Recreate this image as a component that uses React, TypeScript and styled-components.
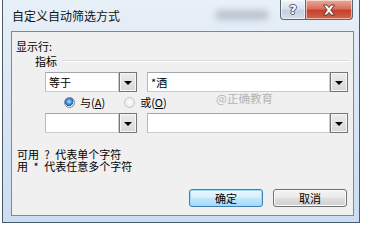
import React from "react";
import styled, { createGlobalStyle } from "styled-components";

const GlobalStyle = createGlobalStyle`
  body {
    margin: 0;
    background: #ffffff;
    font-family: "Noto Sans CJK SC", "Noto Sans", sans-serif;
  }
`;

const Window = styled.div`
  position: relative;
  margin-left: 2px;
  width: 358px;
  height: 223px;
  box-sizing: border-box;
  border: 1px solid #4a5a6c;
  border-top: none;
  background: linear-gradient(to bottom, #e8f0f8 0%, #dbe7f4 40%, #cbddf1 100%);
  display: flex;
  flex-direction: column;
`;

const TitleBar = styled.div`
  height: 31px;
  display: flex;
  align-items: flex-start;
  flex-shrink: 0;
`;

const TitleText = styled.div`
  padding-left: 9px;
  line-height: 31px;
  font-size: 12px;
  color: #111;
`;

const GlassBlur = styled.div`
  position: absolute;
  left: 212px;
  top: 10px;
  width: 54px;
  height: 10px;
  border-radius: 5px;
  background: rgba(90, 100, 115, 0.3);
  filter: blur(3px);
`;

const CaptionButtons = styled.div`
  margin-left: auto;
  margin-right: 6px;
  display: flex;
`;

const CaptionButton = styled.div<{ $close?: boolean }>`
  height: 20px;
  width: ${(p) => (p.$close ? "47px" : "26px")};
  box-sizing: border-box;
  border: 1px solid #5b6775;
  border-top: none;
  border-left: ${(p) => (p.$close ? "none" : "1px solid #5b6775")};
  border-radius: ${(p) => (p.$close ? "0 0 4px 0" : "0 0 0 4px")};
  box-shadow: inset 0 0 0 1px rgba(255, 255, 255, 0.55);
  background: ${(p) =>
    p.$close
      ? "linear-gradient(to bottom, #e9aa9c 0%, #d9705f 45%, #c8402c 55%, #d2644a 100%)"
      : "linear-gradient(to bottom, #eef3f9 0%, #d9e3ee 45%, #c4d2e2 55%, #d2deeb 100%)"};
  display: flex;
  align-items: center;
  justify-content: center;
`;

const HelpGlyph = styled.span`
  font-family: "DejaVu Sans", sans-serif;
  font-weight: bold;
  font-size: 13px;
  line-height: 13px;
  color: #ffffff;
  text-shadow: 0 0 1px #3c4a5a, 1px 0 0 #55606e, -1px 0 0 #55606e, 0 1px 0 #55606e,
    0 -1px 0 #55606e;
`;

const Client = styled.div`
  position: relative;
  margin: 0 5px 0 8px;
  width: 343px;
  height: 185px;
  box-sizing: border-box;
  border: 1px solid #7b8a9b;
  background: #f0f0f0;
  display: flex;
  flex-direction: column;
  font-size: 11px;
  color: #000;
`;

const ShowLabel = styled.div`
  margin: 8px 0 0 4px;
  line-height: 13px;
  height: 13px;
`;

const GroupHeader = styled.div`
  margin: 2px 4px 0 23px;
  height: 13px;
  display: flex;
  align-items: flex-start;
`;

const GroupTitle = styled.span`
  line-height: 13px;
`;

const GroupLine = styled.div`
  flex: 1;
  margin: 5px 0 0 5px;
  border-top: 1px solid #d5dde4;
  border-bottom: 1px solid #ffffff;
`;

const ComboRow = styled.div<{ $top: number }>`
  margin: ${(p) => p.$top}px 0 0 33px;
  height: 20px;
  display: flex;
  gap: 10px;
`;

const Combo = styled.div<{ $width: number }>`
  width: ${(p) => p.$width}px;
  height: 20px;
  display: flex;
`;

const ComboField = styled.div`
  flex: 1;
  box-sizing: border-box;
  background: #ffffff;
  border: 1px solid #c9cdd2;
  border-top-color: #a3a7ad;
  border-left-color: #b6bac0;
  padding-left: 3px;
  line-height: 18px;
`;

const DropButton = styled.div`
  width: 18px;
  box-sizing: border-box;
  border: 1px solid #767676;
  box-shadow: inset 0 0 0 1px #f6f6f6;
  background: linear-gradient(to bottom, #ececec, #d8d8d8);
  display: flex;
  align-items: center;
  justify-content: center;
`;

const Arrow = styled.div`
  width: 0;
  height: 0;
  margin-top: 1px;
  border-left: 4px solid transparent;
  border-right: 4px solid transparent;
  border-top: 4px solid #000;
`;

const RadioRow = styled.div`
  margin-left: 52px;
  height: 21px;
  display: flex;
  align-items: center;
`;

const RadioItem = styled.label<{ $gapAfter?: number }>`
  display: flex;
  align-items: center;
  gap: 5px;
  margin-right: ${(p) => p.$gapAfter ?? 0}px;
  line-height: 13px;
`;

const RadioCircle = styled.span<{ $checked?: boolean }>`
  width: 11px;
  height: 11px;
  box-sizing: border-box;
  border-radius: 50%;
  border: 1px solid ${(p) => (p.$checked ? "#7d8790" : "#c3c7cb")};
  background: ${(p) =>
    p.$checked
      ? "radial-gradient(circle at 45% 40%, #bfe3ff 0%, #3d8fe0 35%, #1a5cb8 60%, #e9edf1 62%, #dde2e7 100%)"
      : "radial-gradient(circle at 50% 45%, #ffffff 0%, #eeeeee 60%, #dcdcdc 100%)"};
`;

const Mnemonic = styled.span`
  text-decoration: underline;
`;

const Watermark = styled.div`
  position: absolute;
  left: 204px;
  top: 59px;
  font-size: 11.5px;
  line-height: 14px;
  color: #b4b4b4;
`;

const HelpText = styled.div`
  margin: 15px 0 0 5px;
  line-height: 12px;
  white-space: pre;
`;

const ButtonRow = styled.div`
  margin: 17px 6px 0 0;
  display: flex;
  justify-content: flex-end;
  gap: 10px;
`;

const PushButton = styled.div<{ $default?: boolean }>`
  width: 74px;
  height: 18px;
  box-sizing: border-box;
  border: 1px solid ${(p) => (p.$default ? "#3c7fb1" : "#707070")};
  border-radius: 3px;
  box-shadow: inset 0 0 0 1px ${(p) => (p.$default ? "#9fdcf9" : "#fbfbfb")};
  background: ${(p) =>
    p.$default
      ? "linear-gradient(to bottom, #eaf6fd 0%, #d9f0fc 45%, #bee6fd 55%, #a7d9f5 100%)"
      : "linear-gradient(to bottom, #f2f2f2 0%, #ebebeb 45%, #dddddd 55%, #cfcfcf 100%)"};
  display: flex;
  align-items: center;
  justify-content: center;
  line-height: 14px;
`;

const CloseIcon = () => (
  <svg width="14" height="12" viewBox="0 0 14 12">
    <path
      d="M1.5 1 H5 L7 3.6 L9 1 H12.5 L8.8 6 L12.5 11 H9 L7 8.4 L5 11 H1.5 L5.2 6 Z"
      fill="#ffffff"
      stroke="#5a2a22"
      strokeWidth="0.9"
      strokeLinejoin="round"
    />
  </svg>
);

const ComboBox = ({ width, value }: { width: number; value?: string }) => (
  <Combo $width={width}>
    <ComboField>{value}</ComboField>
    <DropButton>
      <Arrow />
    </DropButton>
  </Combo>
);

const App = () => {
  return (
    <>
      <GlobalStyle />
      <Window>
        <TitleBar>
          <TitleText>自定义自动筛选方式</TitleText>
          <GlassBlur />
          <CaptionButtons>
            <CaptionButton>
              <HelpGlyph>?</HelpGlyph>
            </CaptionButton>
            <CaptionButton $close>
              <CloseIcon />
            </CaptionButton>
          </CaptionButtons>
        </TitleBar>
        <Client>
          <ShowLabel>显示行:</ShowLabel>
          <GroupHeader>
            <GroupTitle>指标</GroupTitle>
            <GroupLine />
          </GroupHeader>
          <ComboRow $top={4}>
            <ComboBox width={92} value="等于" />
            <ComboBox width={201} value="*酒" />
          </ComboRow>
          <RadioRow>
            <RadioItem $gapAfter={19}>
              <RadioCircle $checked />
              <span>
                与(<Mnemonic>A</Mnemonic>)
              </span>
            </RadioItem>
            <RadioItem>
              <RadioCircle />
              <span>
                或(<Mnemonic>O</Mnemonic>)
              </span>
            </RadioItem>
          </RadioRow>
          <ComboRow $top={0}>
            <ComboBox width={92} />
            <ComboBox width={201} />
          </ComboRow>
          <Watermark>@正确教育</Watermark>
          <HelpText>
            {"可用\u2002?\u2002代表单个字符\n用\u2002*\u2002代表任意多个字符"}
          </HelpText>
          <ButtonRow>
            <PushButton $default>确定</PushButton>
            <PushButton>取消</PushButton>
          </ButtonRow>
        </Client>
      </Window>
    </>
  );
};

export default App;
